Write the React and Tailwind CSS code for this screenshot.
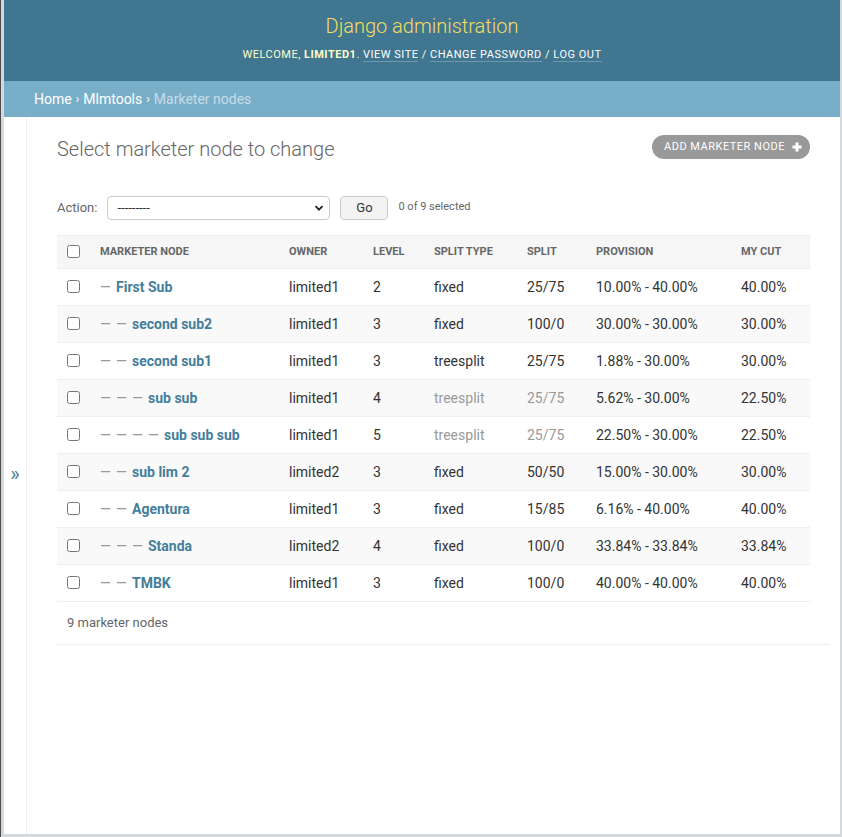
import React from 'react';

const rows = [
    { depth: 1, name: 'First Sub', owner: 'limited1', level: 2, type: 'fixed', split: '25/75', provision: '10.00% - 40.00%', cut: '40.00%' },
    { depth: 2, name: 'second sub2', owner: 'limited1', level: 3, type: 'fixed', split: '100/0', provision: '30.00% - 30.00%', cut: '30.00%' },
    { depth: 2, name: 'second sub1', owner: 'limited1', level: 3, type: 'treesplit', split: '25/75', provision: '1.88% - 30.00%', cut: '30.00%' },
    { depth: 3, name: 'sub sub', owner: 'limited1', level: 4, type: 'treesplit', split: '25/75', provision: '5.62% - 30.00%', cut: '22.50%', muted: true },
    { depth: 4, name: 'sub sub sub', owner: 'limited1', level: 5, type: 'treesplit', split: '25/75', provision: '22.50% - 30.00%', cut: '22.50%', muted: true },
    { depth: 2, name: 'sub lim 2', owner: 'limited2', level: 3, type: 'fixed', split: '50/50', provision: '15.00% - 30.00%', cut: '30.00%' },
    { depth: 2, name: 'Agentura', owner: 'limited1', level: 3, type: 'fixed', split: '15/85', provision: '6.16% - 40.00%', cut: '40.00%' },
    { depth: 3, name: 'Standa', owner: 'limited2', level: 4, type: 'fixed', split: '100/0', provision: '33.84% - 33.84%', cut: '33.84%' },
    { depth: 2, name: 'TMBK', owner: 'limited1', level: 3, type: 'fixed', split: '100/0', provision: '40.00% - 40.00%', cut: '40.00%' },
];

const headers = ['Marketer node', 'Owner', 'Level', 'Split type', 'Split', 'Provision', 'My cut'];
const widths = ['w-[35px]', 'w-[189px]', 'w-[84px]', 'w-[61px]', 'w-[93px]', 'w-[69px]', 'w-[145px]', 'w-[77px]'];

const App = () => {
    return (
        <div className="h-[837px] flex bg-[#d5d9dc] font-['Roboto',sans-serif] overflow-hidden">
            <div className="w-px bg-[#4d4d4d]" />
            <div className="w-[3px]" />

            <div className="w-[836px] mb-[3px] flex flex-col bg-white">
                <header className="h-[81px] bg-[#417690] flex flex-col items-center">
                    <div className="mt-[14px] text-[20px] leading-6 font-light text-[#f5dd5d]">Django administration</div>
                    <div className="mt-[9px] text-[11px] leading-4 tracking-[0.5px] uppercase text-[#ffffcc]">
                        Welcome, <strong className="font-bold">limited1</strong>.{' '}
                        <span className="border-b border-white/25 text-white">View site</span> /{' '}
                        <span className="border-b border-white/25 text-white">Change password</span> /{' '}
                        <span className="border-b border-white/25 text-white">Log out</span>
                    </div>
                </header>

                <div className="h-9 bg-[#79aec8] flex items-center px-[30px] text-sm text-white">
                    <span>Home</span>
                    <span className="mx-1 text-xs">›</span>
                    <span>Mlmtools</span>
                    <span className="mx-1 text-xs">›</span>
                    <span className="text-[#c4dce8]">Marketer nodes</span>
                </div>

                <div className="flex-1 flex">
                    <div className="w-[23px] border-r border-[#eee] flex items-center justify-center text-[#447e9b] text-xl leading-none pb-[3px]">»</div>

                    <main className="flex-1 pl-[30px] pr-[30px] pt-[18px]">
                        <div className="flex items-start justify-between">
                            <h1 className="mt-[2px] text-[20px] leading-6 font-light text-[#666]">Select marketer node to change</h1>
                            <button className="h-6 rounded-full bg-[#999] pl-3 pr-[7px] flex items-center gap-[6px] text-[11px] tracking-[0.5px] uppercase text-white">
                                Add marketer node
                                <svg width="12" height="12" viewBox="0 0 12 12">
                                    <path d="M4.5 1.5h3v3h3v3h-3v3h-3v-3h-3v-3h3z" fill="#fff" />
                                </svg>
                            </button>
                        </div>

                        <div className="mt-[35px] flex items-center h-6 text-[13px] text-[#666]">
                            <span>Action:</span>
                            <div className="ml-[10px] w-[223px] h-6 border border-[#ccc] rounded flex items-center justify-between pl-[9px] pr-[5px] text-[#333]">
                                <span className="text-[13px]">---------</span>
                                <svg width="10" height="10" viewBox="0 0 10 10">
                                    <path d="M1.5 3.2L5 6.7l3.5-3.5" stroke="#222" strokeWidth="1.8" fill="none" />
                                </svg>
                            </div>
                            <div className="ml-[10px] w-12 h-6 border border-[#ccc] rounded bg-[#f3f3f3] flex items-center justify-center text-[13px] text-[#333]">Go</div>
                            <span className="ml-[10px] text-[11px] text-[#666] -mt-[1px]">0 of 9 selected</span>
                        </div>

                        <table className="mt-[15px] w-[753px] table-fixed border-collapse text-sm text-[#333]">
                            <colgroup>
                                {widths.map((w, i) => <col key={i} className={w} />)}
                            </colgroup>
                            <thead>
                                <tr className="h-[33px] bg-[#f6f6f6] border-y border-[#eee]">
                                    <th className="pl-[10px] text-left align-middle">
                                        <input type="checkbox" className="block w-[13px] h-[13px] m-0 -mt-[2px]" />
                                    </th>
                                    {headers.map(h => (
                                        <th key={h} className="pl-2 text-left text-[11px] font-bold uppercase text-[#666]">{h}</th>
                                    ))}
                                </tr>
                            </thead>
                            <tbody>
                                {rows.map((r, i) => (
                                    <tr key={r.name} className={`h-[37px] border-b border-[#eee] ${i % 2 === 1 ? 'bg-[#f9f9f9]' : 'bg-white'}`}>
                                        <td className="pl-[10px] align-middle">
                                            <input type="checkbox" className="block w-[13px] h-[13px] m-0 -mt-[2px]" />
                                        </td>
                                        <td className="pl-2 whitespace-nowrap">
                                            {Array.from({ length: r.depth }).map((_, d) => (
                                                <span key={d} className="inline-block w-4 text-[#999]">—</span>
                                            ))}
                                            <span className="font-bold text-[#447e9b]">{r.name}</span>
                                        </td>
                                        <td className="pl-2">{r.owner}</td>
                                        <td className="pl-2">{r.level}</td>
                                        <td className={`pl-2 ${r.muted ? 'text-[#999]' : ''}`}>{r.type}</td>
                                        <td className={`pl-2 ${r.muted ? 'text-[#999]' : ''}`}>{r.split}</td>
                                        <td className="pl-2 whitespace-nowrap">{r.provision}</td>
                                        <td className="pl-2">{r.cut}</td>
                                    </tr>
                                ))}
                            </tbody>
                        </table>

                        <div className="h-[43px] mr-[-20px] border-b border-[#eee] flex items-center pl-[10px] text-[13px] text-[#666]">9 marketer nodes</div>
                    </main>
                </div>
            </div>

            <div className="w-[2px]" />
        </div>
    );
};

export default App;
